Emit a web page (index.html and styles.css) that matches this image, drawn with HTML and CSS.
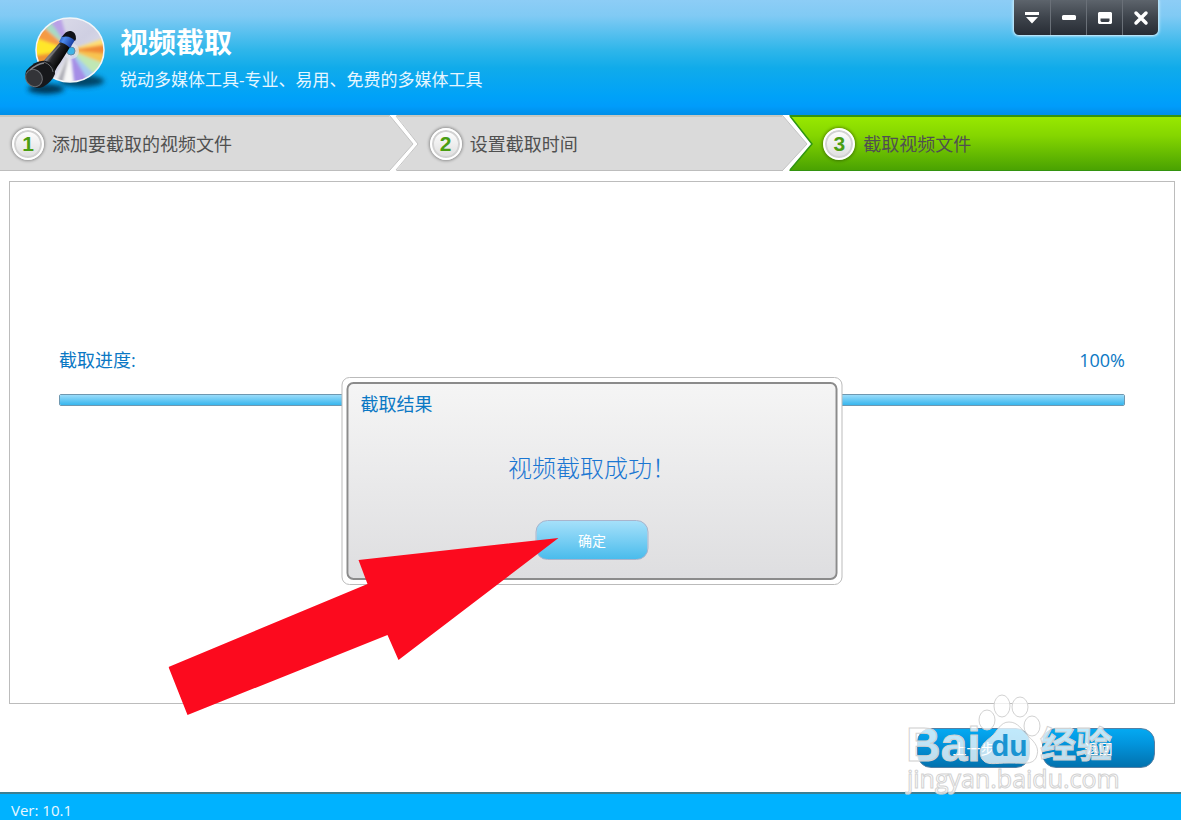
FILE: index.html
```html
<!DOCTYPE html>
<html lang="zh-CN">
<head>
  <meta charset="UTF-8">
  <meta name="viewport" content="width=device-width, initial-scale=1.0">
  <title>视频截取</title>
  <link rel="stylesheet" href="styles.css">
</head>
<body>
  <header class="header">
    <svg class="logo" viewBox="0 0 92 90" aria-hidden="true">
      <defs>
        <linearGradient id="disc" x1="0" y1="0" x2="1" y2="1">
          <stop offset="0" stop-color="#e0dfec"/>
          <stop offset="0.5" stop-color="#cfcfe2"/>
          <stop offset="1" stop-color="#e4e6f0"/>
        </linearGradient>
        <linearGradient id="tube" gradientUnits="userSpaceOnUse" x1="28" y1="38" x2="46" y2="49">
          <stop offset="0" stop-color="#111"/>
          <stop offset="0.3" stop-color="#77777c"/>
          <stop offset="0.5" stop-color="#2a2a2e"/>
          <stop offset="1" stop-color="#000"/>
        </linearGradient>
        <linearGradient id="blue" x1="0" y1="0" x2="1" y2="0.5">
          <stop offset="0" stop-color="#123a9e"/>
          <stop offset="0.4" stop-color="#4d8cf0"/>
          <stop offset="1" stop-color="#14389c"/>
        </linearGradient>
        <filter id="soft" x="-30%" y="-60%" width="160%" height="220%"><feGaussianBlur stdDeviation="2.5"/></filter>
        <filter id="rays"><feGaussianBlur stdDeviation="1.5"/></filter>
        <clipPath id="round"><ellipse cx="52" cy="40" rx="34" ry="32"/></clipPath>
      </defs>
      <ellipse cx="64" cy="71" rx="22" ry="6" fill="#04344f" opacity="0.85" filter="url(#soft)"/>
      <ellipse cx="28" cy="79" rx="18" ry="5" fill="#02253c" opacity="0.85" filter="url(#soft)"/>
      <ellipse cx="52" cy="40" rx="34" ry="32" fill="url(#disc)"/>
      <g clip-path="url(#round)">
        <g filter="url(#rays)">
          <path d="M52 40 20 58 14 40z" fill="#ef9332"/>
          <path d="M52 40 14 46 15 25z" fill="#ffe62c"/>
          <path d="M52 40 15 27 23 13z" fill="#f59a45"/>
          <path d="M52 40 22 14 30 6z" fill="#a7dbc4"/>
          <path d="M52 40 29 7 42 4z" fill="#b9a1e6"/>
          <path d="M52 40 90 27 90 36z" fill="#ffdf74"/>
          <path d="M52 40 90 34 90 45z" fill="#f18a35"/>
          <path d="M52 40 90 44 86 56z" fill="#f8c350"/>
          <path d="M52 40 87 54 78 68z" fill="#c0e7b4"/>
          <path d="M52 40 79 67 70 74z" fill="#a5cbf0"/>
          <path d="M52 40 72 74 56 76z" fill="#a58de6"/>
          <path d="M52 40 56 76 34 74z" fill="#f8f8f8"/>
          <path d="M52 40 44 76 38 74z" fill="#a9a9b2"/>
        </g>
      </g>
      <ellipse cx="52" cy="40" rx="34" ry="32" fill="none" stroke="#f2f5f8" stroke-width="1.500"/>
      <circle cx="53" cy="41" r="8" fill="#dfe3ee" opacity="0.7"/>
      <circle cx="53" cy="41" r="4" fill="#3fb3e6" stroke="#5d8aa8"/>
      <path d="M43 31 29 47q-3 4-7 7l14 9q4-8 6-10l12-19z" fill="url(#tube)"/>
      <path d="M44 26 41 32q6 1 11 6l5-8-7-6z" fill="url(#blue)"/>
      <path d="M44 27q4-7 9-6t5 8l-1 2q-5-6-13-4z" fill="#101218"/>
      <path d="M8 61q10-12 20-10t9 13q-3 8-12 13-9 3-15-4-4-5-2-12z" fill="#17181b"/>
      <ellipse cx="16" cy="68" rx="8" ry="9" transform="rotate(-38 16 68)" fill="#333438" stroke="#6b6d72"/>
      <path d="M12 60q7-6 14-7" fill="none" stroke="#85878c" stroke-width="1.500"/>
      <path d="M26 52q8 3 9 10" fill="none" stroke="#6a6c71"/>
      <path d="M42 35 28 51" fill="none" stroke="#8b8b90" stroke-width="1.500" opacity="0.6"/>
    </svg>
    <div class="titles">
      <h1>视频截取</h1>
      <p>锐动多媒体工具-专业、易用、免费的多媒体工具</p>
    </div>
    <div class="window-buttons">
      <button type="button" aria-label="菜单">
        <svg viewBox="0 0 16 16"><path d="M1 2h14v3H1zM2 7h12L8 13.500z"/></svg>
      </button>
      <button type="button" aria-label="最小化">
        <svg viewBox="0 0 16 16"><rect x="1" y="5" width="14" height="5" rx="1.500"/></svg>
      </button>
      <button type="button" aria-label="最大化">
        <svg viewBox="0 0 16 16"><path fill-rule="evenodd" d="M2 2h12l1 1v10l-1 1H2l-1-1V3zM3.500 8.500v2.500l1 1h7l1-1V8.500z"/></svg>
      </button>
      <button type="button" aria-label="关闭">
        <svg viewBox="0 0 16 16"><path d="M3 3l10 10m0-10L3 13" stroke="#fff" stroke-width="3.500" stroke-linecap="round"/></svg>
      </button>
    </div>
  </header>

  <ol class="steps">
    <li class="step">
      <span class="number">1</span>
      <span>添加要截取的视频文件</span>
    </li>
    <li class="step">
      <svg class="chevron" viewBox="0 0 30 53" aria-hidden="true">
        <path d="M0-2h6l22 29L6 54H0z" fill="#fff"/>
        <path d="M6-1l22 28L6 53" fill="none" stroke="#c4c4c4"/>
        <path d="M-1-1h1l23 28L0 53h-1z" fill="#dadada"/>
        <path d="M0-1l23 28L0 53" fill="none" stroke="#c4c4c4"/>
      </svg>
      <span class="number">2</span>
      <span>设置截取时间</span>
    </li>
    <li class="step active">
      <svg class="chevron" viewBox="0 0 30 53" aria-hidden="true">
        <path d="M0-2h6l23 29L6 54H0z" fill="#fff"/>
        <path d="M7-1l22 28L7 53" fill="none" stroke="#2f9612" stroke-width="1.500"/>
        <path d="M-1-1h1l24 28L0 53h-1z" fill="#dadada"/>
        <path d="M0-1l24 28L0 53" fill="none" stroke="#c4c4c4"/>
      </svg>
      <span class="number">3</span>
      <span>截取视频文件</span>
    </li>
  </ol>

  <main class="panel">
    <div class="progress-head">
      <label for="cutProgress">截取进度:</label>
      <span>100%</span>
    </div>
    <progress id="cutProgress" value="100" max="100"></progress>

    <div class="dialog" role="dialog" aria-labelledby="dialogTitle">
      <div class="dialog-inner">
        <h2 id="dialogTitle">截取结果</h2>
        <p>视频截取成功！</p>
        <button type="button" class="ok-button">确定</button>
      </div>
      <svg class="pointer" viewBox="0 0 390 178" aria-hidden="true">
        <path d="M390 0 190 22 199 46 0 129 19 177 219 97 230 122z" fill="#fc0a1e"/>
      </svg>
    </div>
  </main>

  <div class="actions">
    <button type="button" class="action">上一步</button>
    <button type="button" class="action">返回</button>
    <svg class="watermark" viewBox="0 0 220 104">
      <g fill="#fff" fill-opacity="0.75" stroke="#d2d2d2" stroke-width="1">
        <ellipse cx="82" cy="28" rx="8" ry="10"/>
        <ellipse cx="97" cy="14" rx="8" ry="11"/>
        <ellipse cx="115" cy="15" rx="8" ry="10"/>
        <ellipse cx="127" cy="34" rx="8" ry="10"/>
        <path d="M104 30c9 0 13 8 19 14 8 7 12 13 8 22-4 7-12 5-27 5s-22 3-27-4c-5-9 1-16 9-22 7-6 9-15 18-15z"/>
        <text x="1" y="69" class="mark-name">Bai</text>
        <text x="135" y="66" class="mark-cn">经验</text>
        <text x="2" y="96" class="mark-url">jingyan.baidu.com</text>
      </g>
      <text x="86" y="64" class="mark-du">du</text>
    </svg>
  </div>

  <footer class="status">Ver: 10.1</footer>
</body>
</html>
```
FILE: styles.css
```css
* {
  box-sizing: border-box;
}

body {
  margin: 0;
  min-height: 100vh;
  display: flex;
  flex-direction: column;
  background: #fff;
  font-family: "Open Sans", "Noto Sans CJK SC", sans-serif;
  font-size: 18px;
  line-height: 24px;
}

h1, h2, p, ol {
  margin: 0;
  padding: 0;
  font-weight: normal;
}

button {
  border: 0;
  padding: 0;
  color: #fff;
  font-family: inherit;
  cursor: pointer;
}

/* Header */
.header {
  display: flex;
  align-items: flex-start;
  gap: 10px;
  height: 115px;
  padding: 0 22px 0 18px;
  background: linear-gradient(#8dcdf6 0, #80caf4 16px, #2fb6ea 50px, #10abea 68px, #00a2f8 96px, #009cfb 106px, #008fe8 115px);
}

.logo {
  width: 92px;
  height: 90px;
  margin-top: 10px;
}

.titles {
  flex: 1;
  padding-top: 24px;
  color: #fff;
}

.titles h1 {
  font-size: 28px;
  font-weight: bold;
  line-height: 36px;
}

.titles p {
  margin-top: 8px;
  color: #e6f6ff;
  font-size: 17px;
}

.window-buttons {
  display: flex;
  overflow: hidden;
  border: 1px solid #b5e2f8;
  border-top: 0;
  border-radius: 0 0 6px 6px;
  box-shadow: 0 0 3px #d8f2ff;
}

.window-buttons button {
  display: flex;
  align-items: center;
  justify-content: center;
  width: 36px;
  height: 35px;
  background: linear-gradient(#5d646c, #3e444c 50%, #272c34);
}

.window-buttons button + button {
  border-left: 1px solid #6a7078;
}

.window-buttons svg {
  width: 16px;
  height: 16px;
  fill: #fff;
}

/* Steps */
.steps {
  display: grid;
  grid-template-columns: 1fr 1fr 1fr;
  height: 56px;
  list-style: none;
}

.step {
  display: flex;
  align-items: center;
  gap: 8px;
  border-top: 2px solid #c8c8c0;
  border-bottom: 1px solid #bdbdbd;
  background: #dadada;
  color: #505050;
}

.step:first-child {
  padding-left: 12px;
}

.step.active {
  border-color: #33930f;
  background: linear-gradient(#98e800, #85d600 35%, #4aa202);
}

.chevron {
  width: 30px;
  height: 53px;
  margin: 0 2px 0 -4px;
  overflow: visible;
}

.number {
  width: 32px;
  height: 32px;
  border: 2px solid #fff;
  border-radius: 50%;
  background: linear-gradient(#fff, #dedede);
  box-shadow: 0 0 3px 1px rgba(0, 0, 0, 0.35), inset 0 0 0 2px #d2d2d2;
  color: #4a9e12;
  font-family: "Liberation Sans", sans-serif;
  font-size: 21px;
  font-weight: bold;
  line-height: 28px;
  text-align: center;
}

/* Content */
.panel {
  position: relative;
  flex: 1;
  margin: 10px 6px 0 9px;
  padding: 166px 49px 0;
  border: 1px solid #bcbcbc;
  color: #0b78c4;
}

.progress-head {
  display: flex;
  justify-content: space-between;
}

progress {
  display: block;
  width: 100%;
  height: 12px;
  margin-top: 22px;
  border: 1px solid #6f98b0;
  border-radius: 2px;
  overflow: hidden;
  appearance: none;
}

progress::-webkit-progress-bar {
  background: #fff;
}

progress::-webkit-progress-value {
  background: linear-gradient(#9adcfa, #37b6ee);
}

.dialog {
  position: absolute;
  top: 195px;
  left: 50%;
  width: 501px;
  padding: 4px;
  border: 1px solid #bbb;
  border-radius: 8px;
  background: #fff;
  transform: translateX(-50%);
}

.dialog-inner {
  display: flex;
  flex-direction: column;
  align-items: center;
  height: 198px;
  padding: 8px 12px 18px;
  border: 2px solid #8b8b8b;
  border-radius: 7px;
  background: linear-gradient(#f5f5f5, #dedee0);
}

.dialog h2 {
  align-self: flex-start;
  font-size: 18px;
}

.dialog p {
  margin-top: 34px;
  color: #1a76d2;
  font-size: 24px;
  font-weight: 300;
  line-height: 36px;
}

.ok-button {
  width: 113px;
  height: 40px;
  margin-top: auto;
  border: 1px solid #a9b4cc;
  border-radius: 12px;
  background: linear-gradient(#a5e0fa, #7dd0f4 45%, #4abcec);
  font-size: 14px;
}

.pointer {
  position: absolute;
  top: 160px;
  left: -174px;
  width: 390px;
  height: 178px;
  pointer-events: none;
}

/* Bottom buttons */
.actions {
  position: relative;
  display: flex;
  justify-content: flex-end;
  gap: 12px;
  padding: 24px 26px;
}

.action {
  width: 113px;
  height: 40px;
  border: 1px solid #5580a4;
  border-radius: 14px;
  background: linear-gradient(#04a9f2, #0294dc 40%, #0272ae);
  font-size: 14px;
}

.watermark {
  position: absolute;
  right: 56px;
  bottom: -4px;
  width: 220px;
  height: 104px;
  pointer-events: none;
}

.mark-name,
.mark-du {
  font-family: "Liberation Sans", sans-serif;
  font-weight: bold;
}

.mark-name {
  font-size: 48px;
}

.mark-du {
  fill: #1a94d2;
  font-size: 30px;
}

.mark-cn {
  font-family: "Noto Sans CJK SC", sans-serif;
  font-size: 36px;
  font-weight: bold;
}

.mark-url {
  font-size: 25px;
}

.status {
  height: 28px;
  padding: 5px 11px 0;
  border-top: 2px solid #3c7f92;
  background: #00b2ff;
  color: #e8f8ff;
  font-size: 15px;
  line-height: 22px;
}
```
